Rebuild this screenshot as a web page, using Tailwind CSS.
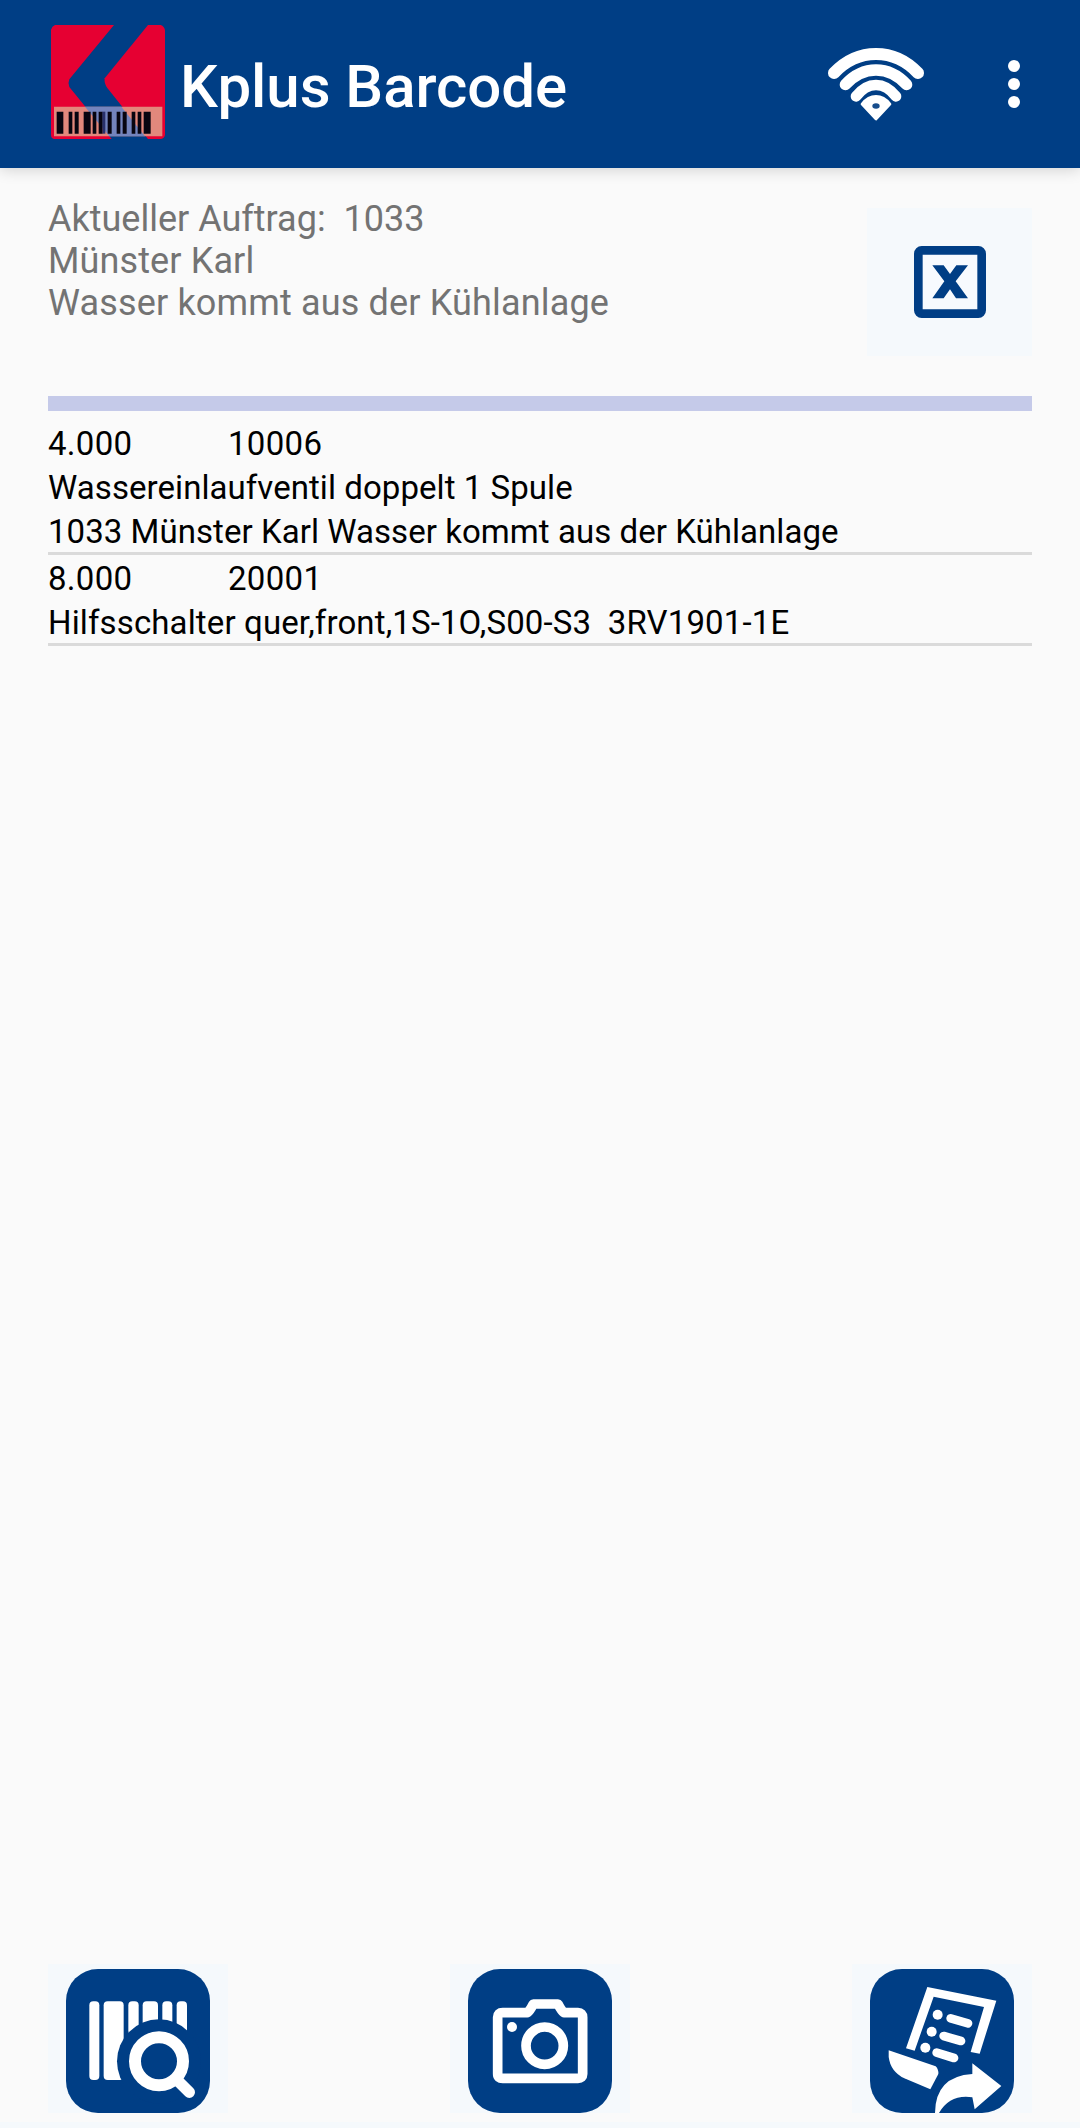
<!DOCTYPE html>
<html lang="de">
<head>
    <meta charset="UTF-8">
    <meta name="viewport" content="width=device-width, initial-scale=1.0">
    <title>Kplus Barcode</title>
    <script src="https://cdn.jsdelivr.net/npm/@tailwindcss/browser@4"></script>
</head>
<body class="bg-[#fafafa] font-[Roboto,sans-serif] h-[2128px] flex flex-col overflow-hidden">
    <!-- App Bar -->
    <header class="h-[168px] shrink-0 bg-[#003e85] flex items-start pl-[51px] pr-[60px] shadow-[0_2px_14px_rgba(0,0,0,0.16)]">
        <svg class="w-[114px] h-[114px] mt-[25px] shrink-0" viewBox="63 44 342 342">
            <path fill="#e60032" d="M75 44H252L118 207Q113 218 118 230L245 386H72Q63 384 63 374V58Q66 47 75 44Z"/>
            <path fill="#e60032" d="M354 44H392Q403 48 405 60V374Q403 385 393 386H354L232 233Q222 219 224 204Z"/>
            <path fill="#e2887c" d="M72 289H397V378H72Z"/>
            <path fill="#7484bd" d="M165 289H274L345 378H238Z"/>
            <path fill="#080510" d="M80 304h20v66h-20zM116 304h11v66h-11zM134 304h12v66h-12zM161 304h21v66h-21zM188 304h11v66h-11zM206 304h12v66h-12zM233 304h12v66h-12zM260 304h11v66h-11zM278 304h12v66h-12zM305 304h11v66h-11zM323 304h11v66h-11zM341 304h21v66h-21z"/>
            <path fill="#28306a" d="M218 304h8v66h-8z"/>
        </svg>
        <h1 class="ml-[15px] mt-[51px] text-[60px] leading-[72px] tracking-[-0.05px] font-medium text-white whitespace-nowrap">Kplus Barcode</h1>
        <svg class="w-[96px] h-[74px] mt-[47px] ml-auto shrink-0" viewBox="84 81 288 222">
            <g fill="none" stroke="#fff" stroke-linecap="round">
                <path stroke-width="36" d="M102 159Q156 102 228 102T354 159"/>
                <path stroke-width="34" d="M136 194Q176 150 228 150T320 194"/>
                <path stroke-width="32" d="M168 229Q195 195 228 195T288 229"/>
            </g>
            <path fill="#fff" stroke="#fff" stroke-width="8" stroke-linejoin="round" d="M186 252Q204 229 228 229T270 252L228 297Z"/>
            <ellipse cx="228" cy="258" rx="11" ry="8" fill="#174d8c"/>
        </svg>
        <svg class="w-[12px] h-[48px] mt-[60px] ml-[84px] shrink-0" viewBox="0 0 12 48" fill="#fff">
            <circle cx="6" cy="6" r="6"/>
            <circle cx="6" cy="24" r="6"/>
            <circle cx="6" cy="42" r="6"/>
        </svg>
    </header>

    <main class="flex-grow px-[48px] flex flex-col">
        <!-- Current order -->
        <section class="flex justify-between h-[228px]">
            <div class="pt-[30px] text-[36px] leading-[42px] text-[#737373]">
                <p>Aktueller Auftrag:&nbsp; 1033</p>
                <p class="tracking-[0.12px]">Münster Karl</p>
                <p class="tracking-[0.16px]">Wasser kommt aus der Kühlanlage</p>
            </div>
            <button class="mt-[40px] w-[165px] h-[148px] bg-[#f5f9fc] flex justify-center pt-[38px]">
                <svg class="w-[72px] h-[72px]" viewBox="222 198 216 216">
                    <rect x="235" y="211" width="190" height="190" rx="10" fill="#f7fafe" stroke="#003e85" stroke-width="26"/>
                    <path fill="#003e85" d="M277 256H311L330 282L349 256H384L347 304L384 355H348L330 328L311 355H277L313 304Z"/>
                </svg>
            </button>
        </section>

        <div class="h-[15px] bg-[#c5cae9]"></div>

        <!-- Items -->
        <ul class="mt-[9px] text-[33px] leading-[44px] text-black">
            <li class="h-[135px] pt-[2px] border-b-3 border-[#dadada]">
                <div class="flex tracking-[0.3px]"><span class="w-[180px]">4.000</span><span>10006</span></div>
                <p class="tracking-[0.06px]">Wassereinlaufventil doppelt 1 Spule</p>
                <p class="tracking-[0.05px]">1033 Münster Karl Wasser kommt aus der Kühlanlage</p>
            </li>
            <li class="h-[91px] pt-[2px] border-b-3 border-[#dadada]">
                <div class="flex tracking-[0.3px]"><span class="w-[180px]">8.000</span><span>20001</span></div>
                <p class="tracking-[0.13px]">Hilfsschalter quer,front,1S-1O,S00-S3&nbsp; 3RV1901-1E</p>
            </li>
        </ul>

        <!-- Actions -->
        <nav class="mt-auto mb-[9px] flex justify-between">
            <button class="w-[180px] h-[149px] bg-[#f5f9fc] flex justify-center items-end">
                <svg class="w-[144px] h-[144px]" viewBox="78 87 432 432">
                    <rect x="78" y="87" width="432" height="432" rx="96" fill="#003e85"/>
                    <g fill="#fff">
                        <rect x="148" y="184" width="30" height="236" rx="12"/>
                        <rect x="191" y="184" width="60" height="236" rx="12"/>
                        <rect x="265" y="184" width="31" height="100" rx="12"/>
                        <rect x="308" y="184" width="46" height="100" rx="12"/>
                        <rect x="367" y="184" width="30" height="100" rx="12"/>
                        <rect x="410" y="184" width="31" height="100" rx="12"/>
                    </g>
                    <circle cx="357" cy="364" r="126" fill="#003e85"/>
                    <circle cx="357" cy="364" r="72" fill="none" stroke="#fff" stroke-width="36"/>
                    <path d="M414 423L448 457" stroke="#fff" stroke-width="34" stroke-linecap="round"/>
                </svg>
            </button>
            <button class="w-[180px] h-[149px] bg-[#f5f9fc] flex justify-center items-end">
                <svg class="w-[144px] h-[144px]" viewBox="84 87 432 432">
                    <rect x="84" y="87" width="432" height="432" rx="96" fill="#003e85"/>
                    <path fill="none" stroke="#fff" stroke-width="29" stroke-linejoin="round" d="M188 218H262Q270 212 280 192H354Q364 212 372 218H414Q428 218 428 232V402Q428 415 414 415H188Q173 415 173 402V232Q173 218 188 218Z"/>
                    <circle cx="314" cy="317" r="56" fill="none" stroke="#fff" stroke-width="29"/>
                    <circle cx="216" cy="261" r="15" fill="#fff"/>
                </svg>
            </button>
            <button class="w-[180px] h-[149px] bg-[#f5f9fc] flex justify-center items-end">
                <svg class="w-[144px] h-[144px]" viewBox="90 87 432 432">
                    <rect x="90" y="87" width="432" height="432" rx="96" fill="#003e85"/>
                    <path fill="#fff" d="M262 141L469 182L419 341L392 336L432 201L281 170L224 332L198 325Z"/>
                    <g stroke="#fff" stroke-width="26" stroke-linecap="round">
                        <path d="M332 235L384 250M311 288L363 303M290 338L342 354"/>
                    </g>
                    <g fill="#fff">
                        <circle cx="293" cy="224" r="15"/>
                        <circle cx="275" cy="275" r="15"/>
                        <circle cx="256" cy="323" r="15"/>
                        <path d="M146 331L287 379Q296 388 295 402L271 448L193 415Q151 394 146 350Z"/>
                        <path d="M285 519Q286 409 397 402V370L484 438L404 508L397 472Q330 462 297 519Z"/>
                    </g>
                </svg>
            </button>
        </nav>
    </main>

    <!-- Bottom edge -->
    <footer class="h-[6px] shrink-0 bg-[#f5f9fc]"></footer>
</body>
</html>
